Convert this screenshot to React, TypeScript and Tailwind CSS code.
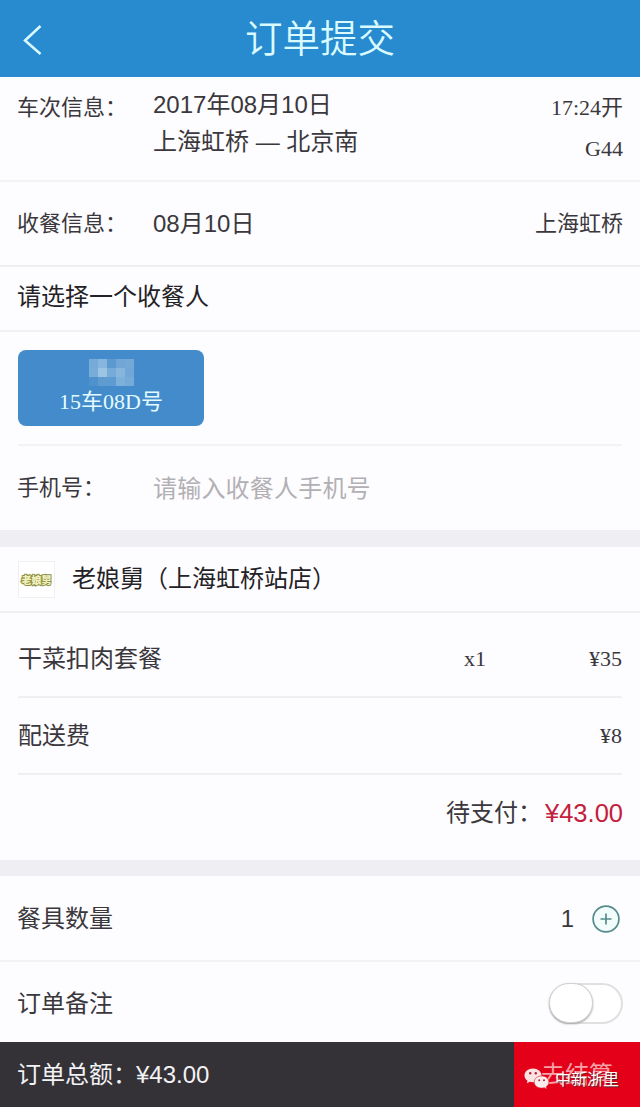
import React, { useState } from 'react';

// pixelated cells hiding the passenger name
const mosaic = [
	'bg-[#76aad8]', 'bg-[#86b5dd]', 'bg-[#5b99d1]', 'bg-[#72a6d6]', 'bg-[#74a8d7]',
	'bg-[#79add9]', 'bg-[#9cc5e4]', 'bg-[#76aad8]', 'bg-[#86b5dd]', 'bg-[#71a6d6]',
	'bg-[#4e91cd]', 'bg-[#5d9bd1]', 'bg-[#5d9bd1]', 'bg-[#7db0da]', 'bg-[#76aad8]',
];

const items = [
	{ name: '干菜扣肉套餐', count: 'x1', price: '¥35', height: 'h-[85px] pt-[9px]' },
	{ name: '配送费', count: '', price: '¥8', height: 'h-[77px] pt-px' },
];

function WechatIcon() {
	return (
		<svg width="26" height="22" viewBox="0 0 26 22" className="shrink-0">
			<path
				d="M9 0.5C4.2 0.5 0.5 3.6 0.5 7.4c0 2.2 1.2 4 3 5.3L2.8 15.3l3-1.5c1 .3 2 .4 3.2.4 4.800 0 8.500-3 8.500-6.800S13.800.5 9 .5z"
				fill="#fbe3e4"
			/>
			<path
				d="M17.600 8c-4.200 0-7.400 2.700-7.400 6s3.200 6.100 7.400 6.100c.9 0 1.800-.1 2.600-.4l2.500 1.400-.6-2.300c1.700-1.100 2.800-2.800 2.800-4.800 0-3.300-3.200-6-7.300-6z"
				fill="#fdeeee"
				stroke="#d8303c"
				strokeWidth="0.700"
			/>
			<g fill="#b3222e">
				<circle cx="6.200" cy="5.300" r="1.200" />
				<circle cx="11.800" cy="5.300" r="1.200" />
				<circle cx="15.200" cy="12.300" r="1" />
				<circle cx="20" cy="12.300" r="1" />
			</g>
		</svg>
	);
}

function App() {
	const [count, setCount] = useState(1);
	const [remark, setRemark] = useState(false);

	return (
		<div
			lang="zh-CN"
			className="w-[640px] h-[1107px] flex flex-col overflow-hidden bg-[#fdfcfe] text-[#3a383c] text-2xl leading-9 whitespace-nowrap font-['Liberation_Sans','Noto_Sans_CJK_SC',sans-serif]"
		>
			{/* header */}
			<header className="relative h-[77px] shrink-0 bg-[#288bd0] flex items-center justify-center text-[#d9fbff]">
				<button className="absolute left-[22px] top-[24px]">
					<svg width="22" height="32" viewBox="0 0 22 32" fill="none" stroke="currentColor" strokeWidth="2.500">
						<path d="M18.500 2L3 16.500l15.500 13.500" />
					</svg>
				</button>
				<h1 className="text-[37.500px] font-[350] leading-[77px] pt-0.5">订单提交</h1>
			</header>

			{/* train */}
			<section className="h-[105px] shrink-0 border-b-2 border-[#f3f2f5] pl-[17px] pr-[17px] pt-[10px] flex">
				<div className="w-[136px] text-[22px] pt-[3px] [font-feature-settings:'halt']">车次信息：</div>
				<div className="flex-1">
					<p>2017年08月10日</p>
					<p className="pt-px">上海虹桥 — 北京南</p>
				</div>
				<div className="text-right text-[22px] leading-[41px] font-['Liberation_Serif','Noto_Sans_CJK_SC',serif]">
					<p>17:24开</p>
					<p>G44</p>
				</div>
			</section>
			<section className="h-[85px] shrink-0 border-b-2 border-[#efeef2] pl-[17px] pr-[17px] flex items-center">
				<div className="w-[136px] text-[22px] [font-feature-settings:'halt']">收餐信息：</div>
				<div className="flex-1">08月10日</div>
				<div className="text-[22px]">上海虹桥</div>
			</section>

			{/* receiver */}
			<h2 className="h-[65px] shrink-0 border-b-2 border-[#f1f0f3] px-[17px] leading-[60px] text-[#242226]">
				请选择一个收餐人
			</h2>
			<section className="h-[114px] shrink-0 mx-[18px] border-b-2 border-[#f3f2f5] pt-[18px]">
				<button className="w-[186px] h-[76px] rounded-lg bg-[#448bcb] text-[#e3fbff] flex flex-col items-center pt-[9px]">
					<span className="grid grid-cols-5 w-[45px] h-[27px]">
						{mosaic.map((color, i) => (
							<i key={i} className={color}></i>
						))}
					</span>
					<span className="text-[22px] leading-[31px] font-['Liberation_Serif','Noto_Sans_CJK_SC',serif]">
						15车08D号
					</span>
				</button>
			</section>
			<section className="h-[84px] shrink-0 px-[17px] flex items-center">
				<div className="w-[136px] text-[22px] [font-feature-settings:'halt']">手机号：</div>
				<input
					className="flex-1 outline-none pt-px tracking-[0.200px] placeholder:text-[#b2b0b4] placeholder:opacity-100"
					placeholder="请输入收餐人手机号"
				/>
			</section>

			{/* shop */}
			<div className="h-[17px] shrink-0 bg-[#efeef2]"></div>
			<section className="h-[66px] shrink-0 border-b-2 border-[#efeff3] px-[18px] flex items-center text-[#242226]">
				<div className="size-[37px] mr-[17px] pt-[3px] border border-[#f0eff1] bg-white flex items-center justify-center text-[10px] font-black text-[#f3f2bd] leading-none [-webkit-text-stroke:2px_#8d9048] [paint-order:stroke_fill]">
					老娘舅
				</div>
				<span className="[font-feature-settings:'halt']">
					老娘舅<span className="ml-3">（</span>上海虹桥站店）
				</span>
			</section>
			{items.map(item => (
				<section
					key={item.name}
					className={'shrink-0 mx-[18px] border-b-2 border-[#f0eff3] flex items-center ' + item.height}
				>
					<div className="w-[446px]">{item.name}</div>
					<div className="text-[22px] font-['Liberation_Serif',serif]">{item.count}</div>
					<div className="flex-1 text-right text-[22px] font-['Liberation_Serif',serif]">{item.price}</div>
				</section>
			))}
			<section className="h-[85px] shrink-0 pr-[17px] flex items-center justify-end pb-[10px]">
				<span className="mr-[15px] [font-feature-settings:'halt']">待支付：</span>
				<span className="text-[25.500px] text-[#c4203c]">¥43.00</span>
			</section>

			{/* options */}
			<div className="h-[16px] shrink-0 bg-[#efeef2]"></div>
			<section className="h-[86px] shrink-0 border-b-2 border-[#f3f2f5] pl-[17px] pr-[20px] pt-0.5 flex items-center">
				<div className="flex-1">餐具数量</div>
				<div className="mr-[18px]">{count}</div>
				<button onClick={() => setCount(c => c + 1)}>
					<svg width="28" height="28" viewBox="0 0 28 28" fill="#f1fcfb" stroke="#568b8c" strokeWidth="1.700">
						<circle cx="14" cy="14" r="12.900" />
						<path d="M14 8.500v11M8.500 14h11" />
					</svg>
				</button>
			</section>
			<section className="h-[80px] shrink-0 pl-[17px] pr-[17px] pt-[3px] flex items-center">
				<div className="flex-1">订单备注</div>
				<button
					className={'w-[74px] h-[41px] rounded-full border-2 border-[#e0dfe1] bg-white flex ' + (remark ? 'justify-end' : '')}
					onClick={() => setRemark(r => !r)}
				>
					<span className="w-[44px] h-[40px] -m-0.5 rounded-full border border-[#d2d1d3] bg-white shadow-[0_1px_2px_#a5a4a6]"></span>
				</button>
			</section>

			{/* bottom bar */}
			<footer className="h-[65px] shrink-0 bg-[#343237] text-[#f3f2f5] flex">
				<div className="flex-1 pl-[17px] leading-[66px] [font-feature-settings:'halt']">
					订单总额：<span className="ml-[11px]">¥43.00</span>
				</div>
				<button className="relative w-[126px] bg-[#e5001a] text-[#f5a3a9] leading-[65px]">
					去结算
					<span className="absolute left-[10px] top-[25px] flex items-center gap-[5px] text-[16px] leading-[22px] text-white [text-shadow:1px_1px_1px_#55262b]">
						<WechatIcon />
						<span className="pt-0.5">中新浙里</span>
					</span>
				</button>
			</footer>
		</div>
	);
}

export default App;
